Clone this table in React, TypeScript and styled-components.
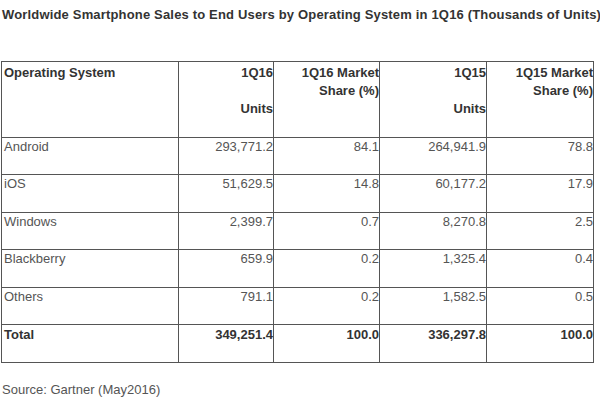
import React from 'react';
import styled, { createGlobalStyle } from 'styled-components';

const GlobalStyle = createGlobalStyle`
    body {
        margin: 0;
        background: #fff;
        font-family: "Liberation Sans", Arial, sans-serif;
    }
`;

const Page = styled.div`
    width: 600px;
    height: 400px;
    padding: 7px 0 0 2px;
    box-sizing: border-box;
`;

const Title = styled.h1`
    margin: 0;
    font-size: 13px;
    line-height: 16px;
    font-weight: bold;
    color: #333;
    white-space: nowrap;
    letter-spacing: 0.17px;
`;

const Table = styled.table`
    margin-top: 38px;
    margin-left: -1px;
    border-collapse: collapse;
    table-layout: fixed;
    width: 593px;
`;

const Col = styled.col<{ $width: number }>`
    width: ${(p) => p.$width}px;
`;

const Cell = styled.td<{ $align?: 'left' | 'right'; $bold?: boolean; $top?: number }>`
    border: 1.5px solid #555;
    vertical-align: top;
    padding: ${(p) => p.$top ?? 0}px 0 0 ${(p) => (p.$align === 'right' ? 0 : 2)}px;
    font-size: 13px;
    line-height: 18px;
    text-align: ${(p) => p.$align || 'left'};
    font-weight: ${(p) => (p.$bold ? 'bold' : 'normal')};
    color: ${(p) => (p.$bold ? '#333' : '#555')};
    white-space: nowrap;
    overflow: hidden;
`;

const HeadRow = styled.tr`
    height: 76px;
`;

const Row = styled.tr<{ $tall?: boolean }>`
    height: ${(p) => (p.$tall ? '38px' : '37.4px')};
`;

const Source = styled.p`
    margin: 19px 0 0;
    font-size: 13px;
    line-height: 16px;
    color: #555;
`;

const rows = [
    ['Android', '293,771.2', '84.1', '264,941.9', '78.8'],
    ['iOS', '51,629.5', '14.8', '60,177.2', '17.9'],
    ['Windows', '2,399.7', '0.7', '8,270.8', '2.5'],
    ['Blackberry', '659.9', '0.2', '1,325.4', '0.4'],
    ['Others', '791.1', '0.2', '1,582.5', '0.5'],
];

const widths = [177, 95, 106, 107, 107];

const App: React.FC = () => (
    <Page>
        <GlobalStyle />
        <Title>Worldwide Smartphone Sales to End Users by Operating System in 1Q16 (Thousands of Units)</Title>
        <Table>
            <colgroup>
                {widths.map((w, i) => (
                    <Col key={i} $width={w} />
                ))}
            </colgroup>
            <tbody>
                <HeadRow>
                    <Cell $bold $top={2}>Operating System</Cell>
                    <Cell $bold $top={2} $align="right">
                        1Q16
                        <br />
                        <br />
                        Units
                    </Cell>
                    <Cell $bold $top={2} $align="right">
                        1Q16 Market
                        <br />
                        Share (%)
                    </Cell>
                    <Cell $bold $top={2} $align="right">
                        1Q15
                        <br />
                        <br />
                        Units
                    </Cell>
                    <Cell $bold $top={2} $align="right">
                        1Q15 Market
                        <br />
                        Share (%)
                    </Cell>
                </HeadRow>
                {rows.map((r) => (
                    <Row key={r[0]}>
                        {r.map((v, i) => (
                            <Cell key={i} $align={i === 0 ? 'left' : 'right'}>
                                {v}
                            </Cell>
                        ))}
                    </Row>
                ))}
                <Row $tall>
                    <Cell $bold $top={1}>Total</Cell>
                    <Cell $bold $top={1} $align="right">349,251.4</Cell>
                    <Cell $bold $top={1} $align="right">100.0</Cell>
                    <Cell $bold $top={1} $align="right">336,297.8</Cell>
                    <Cell $bold $top={1} $align="right">100.0</Cell>
                </Row>
            </tbody>
        </Table>
        <Source>Source: Gartner (May2016)</Source>
    </Page>
);

export default App;
